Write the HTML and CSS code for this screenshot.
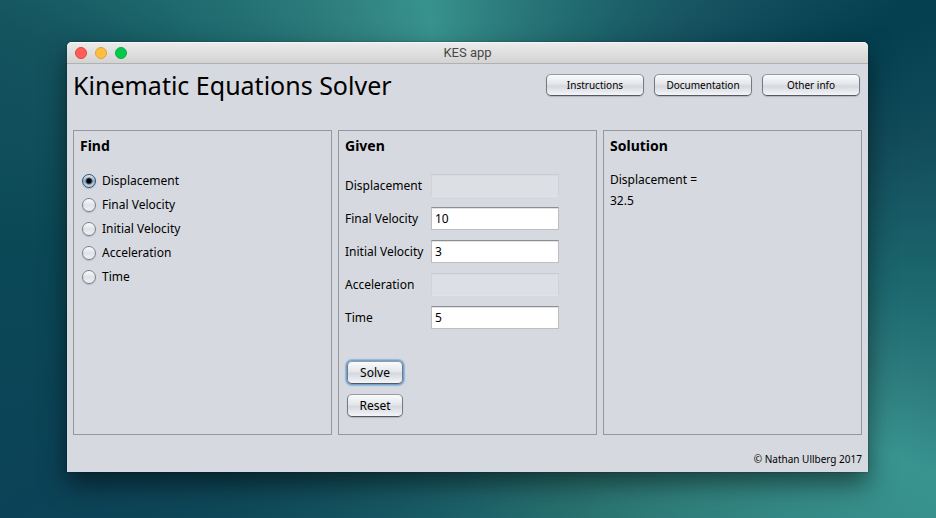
FILE: index.html
```
<!DOCTYPE html>
<html lang="en">
<head>
<meta charset="utf-8">
<meta name="viewport" content="width=device-width, initial-scale=1">
<title>KES app</title>
<link rel="stylesheet" href="styles.css">
</head>
<body>
<div class="window">
  <div class="titlebar">
    <div class="lights">
      <span class="light light-close"></span>
      <span class="light light-minimize"></span>
      <span class="light light-zoom"></span>
    </div>
    <span class="titlebar-text">KES app</span>
  </div>
  <header class="header">
    <h1 class="app-title">Kinematic Equations Solver</h1>
    <nav class="nav">
      <button type="button" class="button button-small">Instructions</button>
      <button type="button" class="button button-small">Documentation</button>
      <button type="button" class="button button-small">Other info</button>
    </nav>
  </header>
  <main class="panels">
    <section class="panel">
      <h2 class="panel-title">Find</h2>
      <div class="options">
        <label class="option"><input class="radio" type="radio" name="find" checked>Displacement</label>
        <label class="option"><input class="radio" type="radio" name="find">Final Velocity</label>
        <label class="option"><input class="radio" type="radio" name="find">Initial Velocity</label>
        <label class="option"><input class="radio" type="radio" name="find">Acceleration</label>
        <label class="option"><input class="radio" type="radio" name="find">Time</label>
      </div>
    </section>
    <section class="panel">
      <h2 class="panel-title">Given</h2>
      <div class="fields">
        <label for="displacement">Displacement</label>
        <input class="field" id="displacement" type="text" disabled>
        <label for="final-velocity">Final Velocity</label>
        <input class="field" id="final-velocity" type="text" value="10">
        <label for="initial-velocity">Initial Velocity</label>
        <input class="field" id="initial-velocity" type="text" value="3">
        <label for="acceleration">Acceleration</label>
        <input class="field" id="acceleration" type="text" disabled>
        <label for="time">Time</label>
        <input class="field" id="time" type="text" value="5">
      </div>
      <div class="actions">
        <button type="button" class="button button-default">Solve</button>
        <button type="button" class="button">Reset</button>
      </div>
    </section>
    <section class="panel">
      <h2 class="panel-title">Solution</h2>
      <p class="solution">Displacement =<br>32.5</p>
    </section>
  </main>
  <footer class="footer">© Nathan Ullberg 2017</footer>
</div>
</body>
</html>
```
FILE: styles.css
```
* {
  box-sizing: border-box;
}

body {
  display: flex;
  flex-direction: column;
  min-height: 100vh;
  margin: 0;
  padding: 42px 68px 46px 67px;
  font-family: "Noto Sans", sans-serif;
  font-size: 12px;
  line-height: 16px;
  color: #000;
  background: conic-gradient(
    from -9deg,
    #38928d 0deg,
    #2b7b7c 18deg,
    #20696f 34deg,
    #15515f 54deg,
    #033f4f 70deg,
    #124c5b 84deg,
    #1d6a70 104deg,
    #2d7b7d 114deg,
    #399490 124deg,
    #307f7c 148deg,
    #28716f 165deg,
    #1c6068 190deg,
    #0e4757 235deg,
    #0c4257 250deg,
    #0a4856 280deg,
    #14545f 306deg,
    #1e6a6e 320deg,
    #2d7c7c 338deg,
    #38928d 360deg
  );
}

.window {
  display: flex;
  flex: 1;
  flex-direction: column;
  border-radius: 5px 5px 0 0;
  background: #d6d9df;
  box-shadow: 0 12px 26px rgba(0, 0, 0, 0.5), 0 0 2px rgba(0, 0, 0, 0.4);
}

.titlebar {
  display: grid;
  grid-template-columns: 1fr auto 1fr;
  align-items: center;
  height: 22px;
  padding: 0 8px;
  border-bottom: 1px solid #b1b1b1;
  border-radius: 5px 5px 0 0;
  background: linear-gradient(#ececec, #d3d3d3);
  box-shadow: inset 0 1px #f6f6f6;
}

.lights {
  display: flex;
  gap: 8px;
}

.light {
  width: 12px;
  height: 12px;
  border: 1px solid;
  border-radius: 50%;
}

.light-close {
  border-color: #e2443f;
  background: #ff5f57;
}

.light-minimize {
  border-color: #dfa136;
  background: #ffbd42;
}

.light-zoom {
  border-color: #12ac3c;
  background: #00ca4e;
}

.titlebar-text {
  font-family: Roboto, sans-serif;
  font-size: 13px;
  color: #484848;
}

.header {
  display: flex;
  align-items: center;
  justify-content: space-between;
  padding: 5px 8px 0 6px;
}

.app-title {
  margin: 0;
  font-size: 25px;
  font-weight: 400;
  line-height: 32px;
}

.nav {
  display: flex;
  gap: 10px;
}

.button {
  width: 56px;
  height: 23px;
  padding: 0;
  border: 1px solid;
  border-color: #979aa0 #777a81 #54585f;
  border-radius: 5px;
  background: linear-gradient(#fafbfc 0%, #e4e6ea 45%, #d5d8dd 55%, #f3f5fa 100%);
  box-shadow: 0 1px 1px #b4b7bd;
  font: inherit;
  color: #000;
}

.button-small {
  width: 98px;
  height: 22px;
  font-size: 10px;
}

.button-default {
  box-shadow: 0 0 0 1px #73a4d1, 0 0 1px 2px #8fb6da;
}

.panels {
  display: grid;
  flex: 1;
  grid-template-columns: repeat(3, 1fr);
  gap: 6px;
  padding: 29px 6px 0;
}

.panel {
  padding: 4px 6px;
  border: 1px solid #95979a;
}

.panel-title {
  margin: 0;
  font-size: 14px;
  font-weight: 700;
  line-height: 22px;
}

.options {
  display: flex;
  flex-direction: column;
  align-items: flex-start;
  margin-top: 12px;
}

.option {
  display: flex;
  align-items: center;
  gap: 6px;
  height: 24px;
  padding-left: 2px;
}

.radio {
  width: 14px;
  height: 14px;
  margin: 0;
  border: 1px solid #7b8088;
  border-radius: 50%;
  appearance: none;
  background: linear-gradient(#fafbfc 0%, #dfe2e6 50%, #eef0f5 100%);
  box-shadow: 0 1px 1px #b4b7bd;
}

.radio:checked {
  border-color: #33506f;
  background:
    radial-gradient(circle, #000 2px, transparent 4px),
    linear-gradient(#dfe9f3, #8fadc7 50%, #c3daee);
}

.fields {
  display: grid;
  grid-template-columns: 86px 128px;
  row-gap: 10px;
  align-items: center;
  margin-top: 17px;
}

.field {
  width: 100%;
  height: 23px;
  padding: 0 3px;
  border: 1px solid;
  border-color: #8d8e91 #bcbec2 #bcbec2;
  border-radius: 0;
  background: #fff;
  box-shadow: inset 0 1px #e2e3e5;
  font: inherit;
  color: #000;
}

.field:disabled {
  border-color: #c8cbd0 #d0d3d9 #dfe2e6;
  background: #dce0e5;
  box-shadow: inset 0 1px #d7dae0;
}

.actions {
  display: flex;
  flex-direction: column;
  gap: 10px;
  margin-top: 32px;
  padding-left: 2px;
}

.solution {
  margin: 12px 0 0;
  line-height: 21px;
}

.footer {
  padding: 16px 6px 5px;
  font-size: 10px;
  text-align: right;
}
```
